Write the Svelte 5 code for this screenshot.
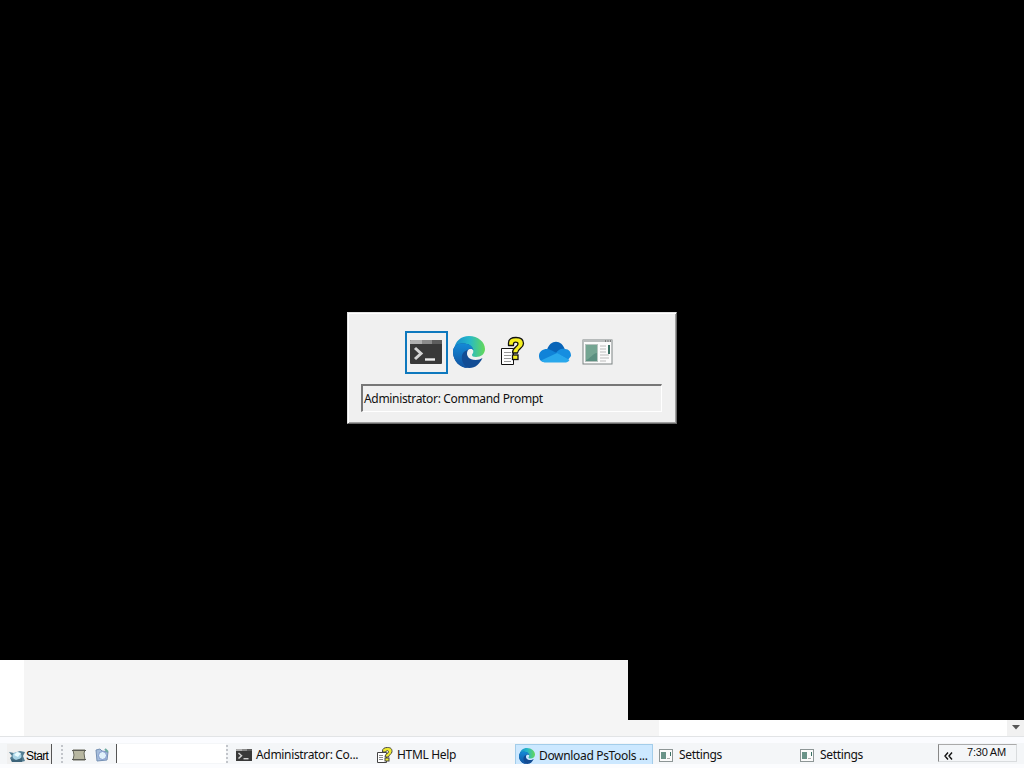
<script>
    let windows = [
        { id: 'cmd', icon: 'terminal', title: 'Administrator: Command Prompt' },
        { id: 'edge', icon: 'edge', title: 'Download PsTools' },
        { id: 'help', icon: 'help', title: 'HTML Help' },
        { id: 'cloud', icon: 'cloud', title: 'OneDrive' },
        { id: 'settings', icon: 'app', title: 'Settings' },
    ];
    let current = $state(0);

    let tasks = [
        { icon: 'terminal', label: 'Administrator: Co...', kind: 'admin' },
        { icon: 'helpSmall', label: 'HTML Help', kind: 'html' },
        { icon: 'edge', label: 'Download PsTools ...', kind: 'active' },
        { icon: 'appSmall', label: 'Settings', kind: 'settings' },
        { icon: 'appSmall', label: 'Settings', kind: 'settings' },
    ];
</script>

{#snippet icon(name, size)}
    <svg class="icon" width={size} height={size} viewBox={name.endsWith('Small') ? '0 0 16 16' : '0 0 32 32'}>
        {#if name == 'terminal'}
            <rect x="0" y="4" width="32" height="24" rx="1" fill="#393939" />
            <path d="M0 8V5q0-1 1-1h30q1 0 1 1v3z" fill="#5d5d5d" />
            <path d="M0 8V5q0-1 1-1h11v4z" fill="#b0b0b0" />
            <path d="M12 4h10v4H12z" fill="#8a8a8a" />
            <path d="M5 12l6 5.500-6 5.500" fill="none" stroke="#d4d4d4" stroke-width="3" />
            <path d="M15 23.500h10" stroke="#eee" stroke-width="2.400" />
        {:else if name == 'edge'}
            <path d="M1 14C2 5 8 0 16 0c9 0 16 6 16 13 0 5-4 8-9 8-3 0-4-1-4-2s2-2 1-5C19 10 14 8 9 9 5 10 2 12 1 14z" fill="url(#edgeTop)" />
            <path d="M0 16C0 10 5 7 10 7.500c5 0 9 2 10.500 6.500-2-2-5-1.500-6 1-2 5 2 9 8 9 3 0 5-1 7-2-3 6-7 10-13 10C7 32 0 25 0 16z" fill="#124c94" />
            <path d="M0 16C0 10 5 7 10 7.500c5 0 9 2 10.500 6.500-2-2-5-1.500-6 0-8 2-7 13 0 18C7 32 0 25 0 16z" fill="url(#edgeLeft)" />
        {:else if name == 'help'}
            <path d="M5.500 12.500h12v16h-12z" fill="#fff" stroke="#111" />
            <path d="M8 16.500h7M8 19.500h7M8 22.500h7M8 25.500h7" stroke="#999" />
            <path d="M12.500 9.500V7c0-4 3-5.500 7.500-5.500 5 0 7.500 2 7.500 6 0 5-6 5-6 9.500h-5c0-6 5.500-6 5.500-9 0-2.500-4.500-2.500-4.500 0v1.500z" fill="#f5f020" stroke="#111" stroke-width="1.300" stroke-linejoin="round" />
            <rect x="16.500" y="19" width="5.500" height="4.500" fill="#f5f020" stroke="#111" stroke-width="1.300" />
        {:else if name == 'helpSmall'}
            <path d="M.500 5.500h9v10h-9z" fill="#fff" stroke="#444" />
            <path d="M2 8.500h4M2 10.500h4M2 12.500h4" stroke="#888" />
            <path d="M5.500 5V4c0-2.500 2-3.500 5-3.500 3.500 0 4.500 1.500 4.500 4 0 3-3.500 3-3.500 5.500H8c0-3.500 3.500-3.500 3.500-5 0-2-2.500-2-2.500 0z" fill="#f0ec30" stroke="#444" stroke-linejoin="round" />
            <rect x="8" y="11" width="4" height="3" fill="#f0ec30" stroke="#444" />
        {:else if name == 'cloud'}
            <path d="M8 14C11 3 23 3 26 14L15 22 4 19z" fill="#0864b8" />
            <path d="M1 24c-3-6 1-11 7-11 3 0 5 2 10 4l-9 9H6c-2 0-4-1-5-2z" fill="#1083d8" />
            <path d="M17 17c2-3 5-5 9-4 4 0 6 3 6 7l-3 4z" fill="#168ee0" />
            <path d="M2 24.500L18 17l12.500 7c-1 2-3 2.500-5 2.500H7c-2 0-4-.5-5-2z" fill="#29a8ec" />
        {:else if name == 'appSmall'}
            <rect x=".500" y="2.500" width="13" height="12" fill="#fbfbfb" stroke="#8d9696" />
            <rect x="2" y="5" width="5" height="7" fill="#6a9388" />
            <path d="M8 11.500h3" stroke="#aaa" />
            <path d="M11.500 5v4" stroke="#397063" />
        {:else}
            <rect x="1" y="4" width="29" height="24" fill="#fbfbfb" stroke="#7d8383" />
            <path d="M1 5h29" stroke="#b9bdbd" stroke-width="2" />
            <path d="M23 5h1M25.500 5h1M28 5h1" stroke="#444" />
            <rect x="3.500" y="8.500" width="12" height="17" fill="#74a592" stroke="#b6c3be" />
            <path d="M4 24c4-1 7-7 11-7v8H4z" fill="#5b8f80" />
            <path d="M18 10h6M18 13h6M18 16h6M18 19h9M18 22h9M18 25h6" stroke="#bbb" />
            <rect x="26" y="9" width="2" height="9" fill="#397063" />
        {/if}
    </svg>
{/snippet}

<svg class="defs" width="0" height="0">
    <defs>
        <linearGradient id="edgeTop">
            <stop offset="0" stop-color="#168bcf" />
            <stop offset=".5" stop-color="#26b8c8" />
            <stop offset="1" stop-color="#65d957" />
        </linearGradient>
        <linearGradient id="edgeLeft" x1="0" y1="0" x2="0" y2="1">
            <stop offset="0" stop-color="#148ad7" />
            <stop offset="1" stop-color="#1152a0" />
        </linearGradient>
    </defs>
</svg>

<div class="screen">
    <div class="desktop"></div>
    <div class="pageRemnant">
        <div class="margin"></div>
        <div class="content"></div>
    </div>
    <div class="pageBottom">
        <div class="margin"></div>
        <div class="content"></div>
        <div class="scroll"><svg width="8" height="5"><path d="M0 0h8L4 4.500z" fill="#555" /></svg></div>
    </div>

    <div class="taskbar">
        <button class="start">
            <svg width="16" height="16" viewBox="0 0 16 16">
                <path d="M0 4l5 1 6-2 5 1-2 4 2 5-4 1H3l-2-4 2-2z" fill="#527c91" />
                <ellipse cx="8" cy="8" rx="4.500" ry="4" fill="#a9d4e6" />
                <path d="M5 7l3-3 4 1-3 4z" fill="#e8fbff" />
                <path d="M2 11l5 1 6-2v4H3z" fill="#3d647a" />
            </svg>
            <span>Start</span>
        </button>
        <div class="grip first"></div>
        <svg class="quick" width="14" height="12" viewBox="0 0 14 12">
            <path d="M1 1h12l-1 3 1 7H1l1-5z" fill="#b8b7a1" stroke="#66675b" />
            <path d="M0 1.500h14M0 10.500h14" stroke="#5c5c55" />
        </svg>
        <svg class="quick folder" width="14" height="14" viewBox="0 0 14 14">
            <path d="M1 2l4-1 2 2 6 1-1 8-10 1z" fill="#a5bddb" stroke="#7590b4" />
            <circle cx="7.500" cy="7.500" r="4" fill="#e1f2fb" stroke="#8198cd" />
            <path d="M10 1l3 3" stroke="#6caa9f" stroke-width="2" />
        </svg>
        <div class="address"></div>
        <div class="grip"></div>
        <div class="tasks">
            {#each tasks as task}
                <div class="task {task.kind}">
                    {@render icon(task.icon, 16)}
                    <span>{task.label}</span>
                </div>
            {/each}
        </div>
        <div class="tray">
            <svg width="9" height="8"><path d="M4 .5L1 4l3 3.500M8 .5L5 4l3 3.500" fill="none" stroke="#111" stroke-width="1.400" /></svg>
            <span>7:30 AM</span>
        </div>
    </div>

    <div class="switcher">
        <div class="choices">
            {#each windows as item, i}
                <button class="choice" class:selected={current == i} onclick={() => current = i}>
                    {@render icon(item.icon, 32)}
                </button>
            {/each}
        </div>
        <div class="caption"><span>{windows[current].title}</span></div>
    </div>
</div>

<style>
    :global(body) {
        background: #000;
        overflow: hidden;
    }

    .defs {
        position: absolute;
    }

    .screen {
        position: relative;
        display: flex;
        flex-direction: column;
        width: 1024px;
        height: 768px;
        font: 12px/16px "Noto Sans", sans-serif;
        letter-spacing: -0.33px;
        color: #111;
    }

    .desktop {
        flex: 1;
        background: #000;
    }

    .pageRemnant {
        display: flex;
        height: 60px;
        width: 628px;
    }

    .pageBottom {
        display: flex;
        height: 16px;
        background: #fff;
    }

    .margin {
        width: 24px;
        background: #fff;
    }

    .content {
        width: 604px;
        background: #f5f5f5;
    }

    .pageBottom .content {
        width: 635px;
    }

    .scroll {
        display: flex;
        justify-content: center;
        width: 17px;
        padding-top: 5px;
        margin-left: auto;
        background: #f1f1f1;
        box-sizing: border-box;
    }

    .taskbar {
        display: flex;
        align-items: flex-start;
        box-sizing: border-box;
        height: 32px;
        padding: 7px 7px 0 7px;
        border-top: 1px solid #e2e4e6;
        background: linear-gradient(#fbfcff 0 6px, #f4f6f8 6px 27px, #fbfcfe 27px);
    }

    .start {
        display: flex;
        align-items: center;
        box-sizing: border-box;
        width: 45px;
        height: 20px;
        padding: 3px 0 0 2px;
        border: 0;
        border-right: 1px solid #555;
        background: #f0f0f0;
        font: 12px "Liberation Sans", sans-serif;
    }

    .start svg {
        flex: none;
    }

    .start span {
        letter-spacing: -0.6px;
        margin-left: 1px;
    }

    .grip {
        width: 2px;
        height: 19px;
        margin-top: 1px;
        background: repeating-linear-gradient(#c2c5ca 0 2px, transparent 2px 4px);
    }

    .grip.first {
        margin-left: 9px;
        margin-right: 9px;
    }

    .quick {
        margin-top: 5px;
    }

    .folder {
        margin: 4px 0 0 9px;
    }

    .address {
        box-sizing: border-box;
        width: 110px;
        height: 19px;
        margin-left: 7px;
        border-left: 1px solid #555;
        background: #fff;
    }

    .tasks {
        display: flex;
        margin-left: 5px;
        gap: 3px;
    }

    .task {
        display: flex;
        box-sizing: border-box;
        align-items: center;
        width: 138px;
        height: 20px;
        padding: 1px 0 0 3px;
        white-space: nowrap;
    }

    .task .icon {
        flex: none;
        margin-right: 4px;
    }

    .active {
        padding-top: 3px;
        border: 1px solid #a3cdea;
        border-bottom: 0;
        background: #cce8ff;
    }

    .tray {
        display: flex;
        box-sizing: border-box;
        width: 79px;
        height: 18px;
        margin-left: auto;
        padding: 7px 0 0 5px;
        border: 1px solid #d9dcde;
        border-top-color: #aaa;
        border-left-color: #888;
        font: 11px/12px "Liberation Sans", sans-serif;
    }

    .tray span {
        margin: -6px 0 0 14px;
        letter-spacing: -0.2px;
        white-space: nowrap;
    }

    .switcher {
        position: absolute;
        left: 347px;
        top: 312px;
        box-sizing: border-box;
        width: 330px;
        height: 112px;
        padding: 18px 13px 0;
        border: 1px solid #e3e3e3;
        border-right-color: #696969;
        border-bottom-color: #696969;
        box-shadow: inset 1px 1px #fff, inset -1px -1px #a0a0a0;
        background: #f0f0f0;
    }

    .choices {
        display: flex;
        justify-content: center;
        height: 43px;
    }

    .choice {
        display: flex;
        justify-content: center;
        box-sizing: border-box;
        width: 43px;
        height: 43px;
        padding: 3px 0 0;
        border: 2px solid transparent;
        background: none;
    }

    .selected {
        border-color: #0e78bd;
    }

    .caption {
        box-sizing: border-box;
        width: 301px;
        height: 28px;
        margin-top: 10px;
        padding: 5px 0 0 1px;
        border: 1px solid #fff;
        border-top: 2px solid #777;
        border-left: 2px solid #777;
        white-space: nowrap;
    }
</style>
